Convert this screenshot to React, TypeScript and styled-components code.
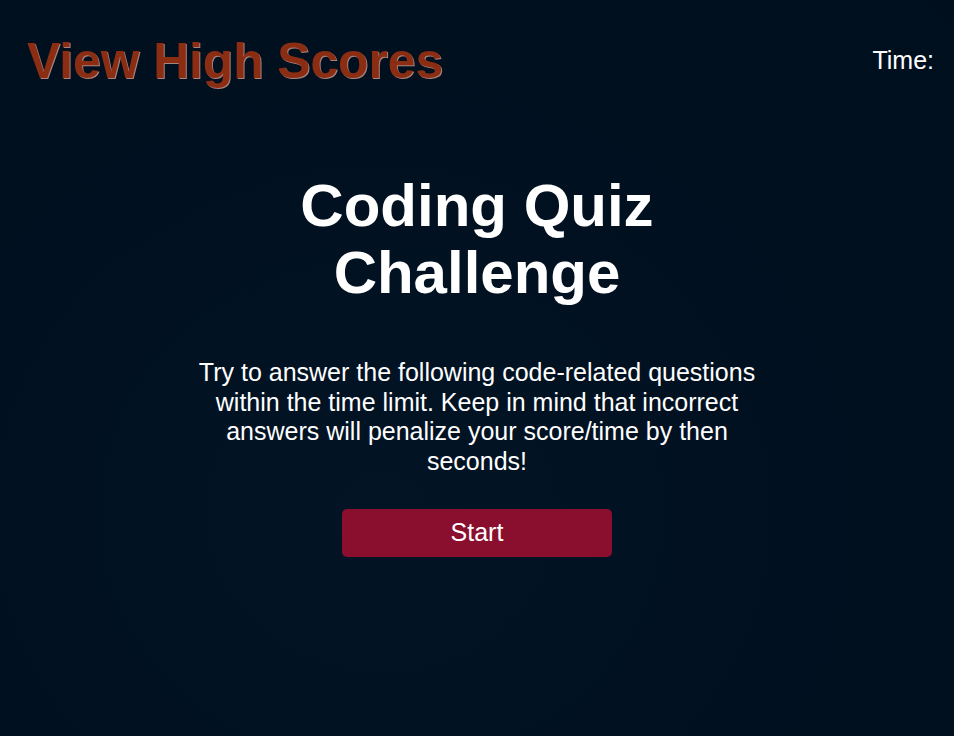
import React from "react";
import styled, { createGlobalStyle } from "styled-components";

const Global = createGlobalStyle`
  html, body {
    margin: 0;
    padding: 0;
    background: #01101f;
  }
  body {
    font-family: "Liberation Sans", Arial, sans-serif;
    color: #ffffff;
  }
`;

const Page = styled.div`
  min-height: 736px;
  background: radial-gradient(ellipse at 40% 70%, #021425 0%, #01101f 60%, #000f1e 100%);
  box-sizing: border-box;
`;

const Header = styled.header`
  display: flex;
  justify-content: space-between;
  align-items: flex-start;
  padding: 32px 20px 0 27px;
`;

const HighScores = styled.a`
  font-size: 49.7px;
  font-weight: bold;
  color: #8b2d12;
  text-shadow: 1px 1px 0 rgba(220, 170, 160, 0.75);
  text-decoration: none;
  line-height: 58px;
  cursor: pointer;
`;

const Timer = styled.div`
  font-size: 25px;
  line-height: 28px;
  margin-top: 14px;
`;

const Main = styled.main`
  display: flex;
  flex-direction: column;
  align-items: center;
  text-align: center;
  padding-top: 82px;
`;

const Title = styled.h1`
  font-size: 60px;
  font-weight: bold;
  line-height: 67px;
  margin: 0;
  width: 420px;
`;

const Intro = styled.p`
  font-size: 25px;
  line-height: 29.7px;
  width: 590px;
  margin: 52px 0 0;
`;

const StartButton = styled.button`
  margin-top: 32px;
  width: 270px;
  height: 48px;
  border: none;
  border-radius: 5px;
  background: #8a0e2e;
  color: #ffffff;
  font-family: "Liberation Sans", Arial, sans-serif;
  font-size: 25px;
  cursor: pointer;
`;

export default function App() {
  return (
    <Page>
      <Global />
      <Header>
        <HighScores>View High Scores</HighScores>
        <Timer>Time:</Timer>
      </Header>
      <Main>
        <Title>Coding Quiz Challenge</Title>
        <Intro>
          Try to answer the following code-related questions within the time
          limit. Keep in mind that incorrect answers will penalize your
          score/time by then seconds!
        </Intro>
        <StartButton>Start</StartButton>
      </Main>
    </Page>
  );
}
